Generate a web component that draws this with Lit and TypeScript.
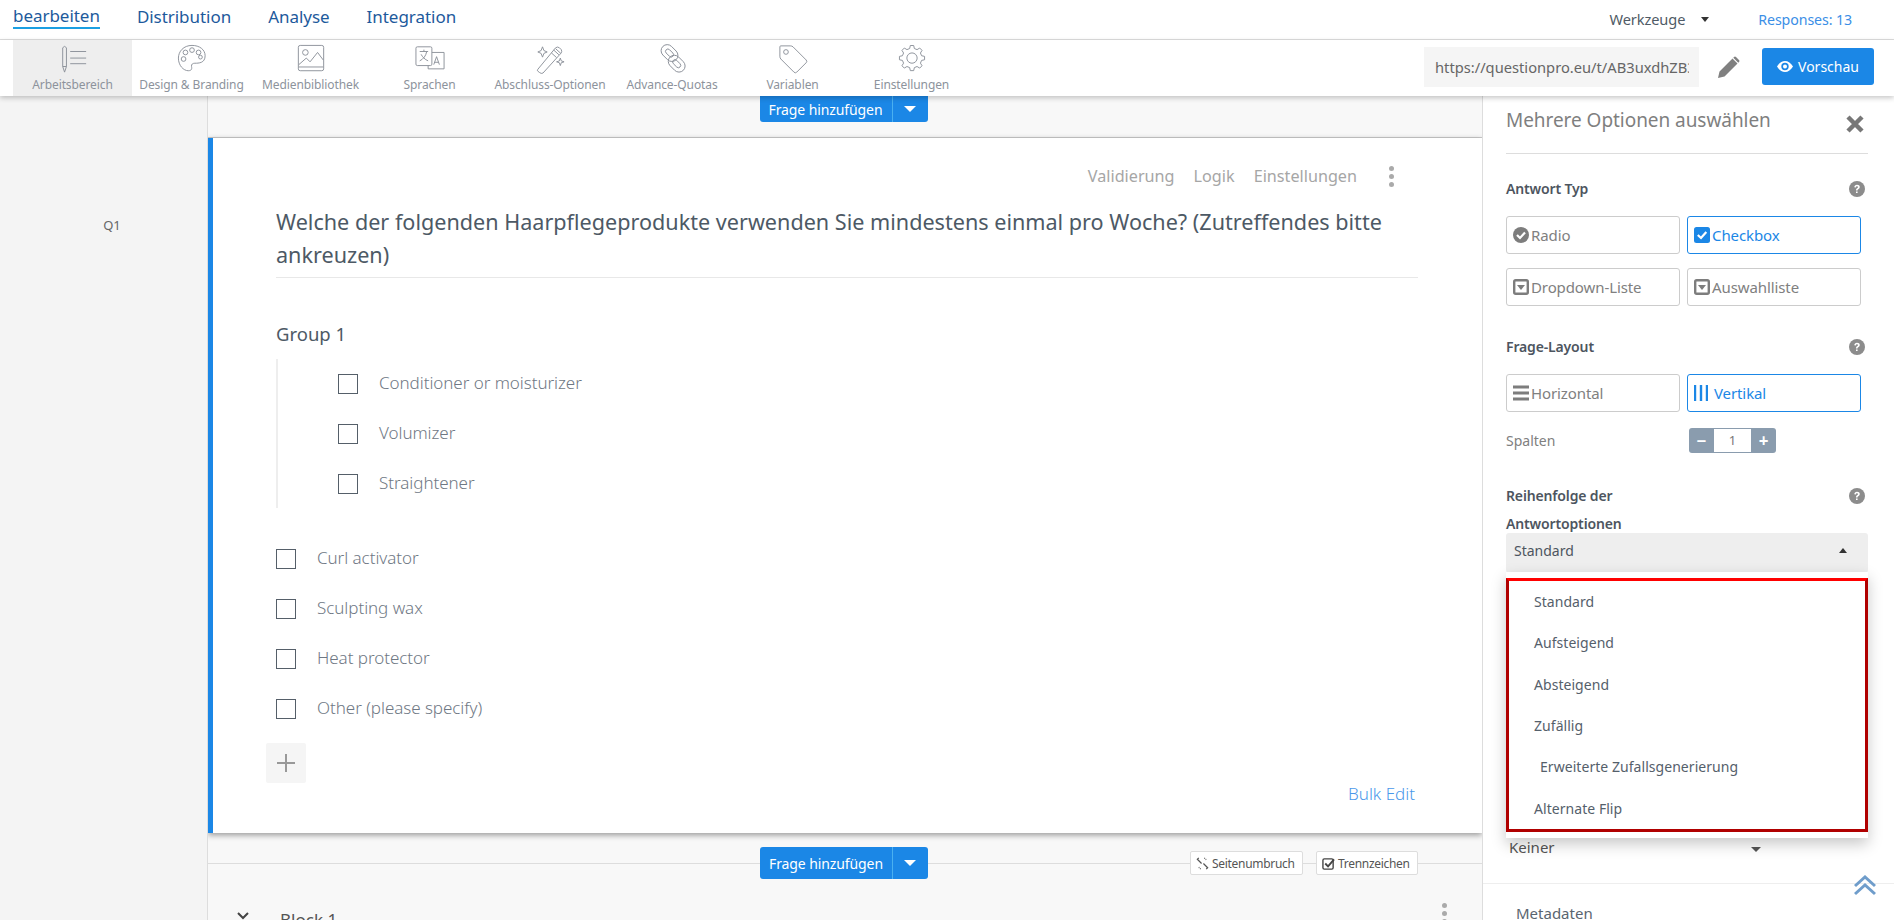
import { LitElement, html, css, svg } from "lit";
import { customElement } from "lit/decorators.js";

const gearPath = () => {
  const pts: string[] = [];
  const n = 8, cx = 16, cy = 15;
  for (let i = 0; i < n; i++) {
    const a = (i / n) * Math.PI * 2 - Math.PI / 2;
    const w = Math.PI / n;
    const p = (r: number, t: number) => `${(cx + r * Math.cos(t)).toFixed(1)} ${(cy + r * Math.sin(t)).toFixed(1)}`;
    pts.push(`${i ? "L" : "M"}${p(10.5, a - w * 0.62)}`, `L${p(13.5, a - w * 0.34)}`, `L${p(13.5, a + w * 0.34)}`, `L${p(10.5, a + w * 0.62)}`);
  }
  return pts.join(" ") + " Z";
};

const toolIcons: Record<string, unknown> = {
  work: svg`<path d="M5 4 Q7 1 9 4 V24 L7 30 L5 24 Z M5 24 H9"/><path d="M13 8 H30 M13 15 H30 M13 21 H30"/>`,
  palette: svg`<path d="M16 1.5 C7 1.500 1.500 8 1.500 15 C1.500 23 7 28.500 12 28.500 C16 28.500 16 26 15.500 24 C15 21.500 17 20.500 19 20.500 C23 20.500 30 20.500 30 12.500 C30 6 24 1.500 16 1.500 Z"/><circle cx="9" cy="9" r="2.500"/><circle cx="16" cy="6.500" r="2.500"/><circle cx="23" cy="9" r="2.500"/><circle cx="7" cy="16" r="2.500"/><circle cx="25" cy="14" r="2"/>`,
  image: svg`<rect x="2.500" y="1.500" width="27" height="27" rx="2"/><circle cx="10" cy="9" r="3"/><path d="M3 22 L11 15 L15 19 L23 9 L29 17 M3 24.500 H29"/>`,
  lang: svg`<rect x="1" y="3" width="17" height="20" rx="1.500"/><path d="M18 9 H31 V26.500 H14 V23"/><path d="M5 8 H14 M9.500 6 V8 M12.500 8 C11.500 13 9 16 5 18 M6.500 11 C8 14 10.500 16.500 14 18"/><path d="M20 22 L23 13.500 L26 22 M21 19.500 H25"/>`,
  wand: svg`<path d="M3 27 L22 4 Q24 2.500 26 4 L28 6 Q29 8 28 9.500 L8.500 31 Q6.500 32 5 30.500 L3 29 Q2 28 3 27 Z M17.500 9.500 L23 14.500 M20 6.500 L25.500 11.500 M22 5 L27.500 10"/><path d="M8 3 L9.500 7 L13 8.500 L9.500 10 L8 14 L6.500 10 L3 8.500 L6.500 7 Z"/><path d="M27 15 L28 18 L31 19 L28 20 L27 23 L26 20 L23 19 L26 18 Z"/>`,
  chain: svg`<g transform="rotate(45 13 10)"><rect x="3" y="3" width="20" height="13" rx="6.500"/><rect x="8" y="7" width="10" height="5" rx="2.500"/></g><g transform="rotate(45 21 21)"><rect x="11" y="14.500" width="20" height="13" rx="6.500"/><rect x="16" y="18.500" width="10" height="5" rx="2.500"/></g>`,
  tag: svg`<path d="M3 2 H13 Q15 2 16 3 L30 17 Q31.500 18.500 30 20 L20 30 Q18.500 31.500 17 30 L3 16 Q2 15 2 13 V3 Q2 2 3 2 Z"/><circle cx="8.500" cy="8.500" r="2.500"/>`,
  gear: svg`<path d="${gearPath()}" stroke-linejoin="round"/><circle cx="16" cy="15" r="5.500"/>`,
};

const tools = [
  { label: "Arbeitsbereich", icon: "work", cls: "active" },
  { label: "Design & Branding", icon: "palette", cls: "" },
  { label: "Medienbibliothek", icon: "image", cls: "" },
  { label: "Sprachen", icon: "lang", cls: "" },
  { label: "Abschluss-Optionen", icon: "wand", cls: "wide" },
  { label: "Advance-Quotas", icon: "chain", cls: "wide" },
  { label: "Variablen", icon: "tag", cls: "" },
  { label: "Einstellungen", icon: "gear", cls: "" },
];

const help = html`<svg class="help" viewBox="0 0 16 16"><circle cx="8" cy="8" r="8" fill="#8c8c8c"/><path d="M5.300 6.200 C5.300 4.600 6.500 3.700 8 3.700 C9.600 3.700 10.800 4.600 10.800 6 C10.800 8 8.500 7.900 8.500 9.600 H7 C7 7.200 9 7.300 9 6.100 C9 5.500 8.600 5.200 8 5.200 C7.300 5.200 7 5.600 6.900 6.400 Z M7 10.400 H8.600 V12 H7 Z" fill="#fff"/></svg>`;

const ic = {
  radio: html`<svg class="oi" viewBox="0 0 16 16"><circle cx="8" cy="8" r="8" fill="#7d7d7d"/><path d="M4 8 L7 11 L12 5.500" fill="none" stroke="#fff" stroke-width="2.200"/></svg>`,
  check: html`<svg class="oi" viewBox="0 0 16 16"><rect width="16" height="16" rx="2.500" fill="#1b87e6"/><path d="M3.800 8 L7 11 L12.300 5" fill="none" stroke="#fff" stroke-width="2.200"/></svg>`,
  drop: html`<svg class="oi" viewBox="0 0 16 16"><rect x="1.200" y="1.200" width="13.600" height="13.600" rx="1.500" fill="none" stroke="#7d7d7d" stroke-width="2.400"/><path d="M4 6 H12 L8 11 Z" fill="#7d7d7d"/></svg>`,
  bars: html`<svg class="oi" viewBox="0 0 16 16"><path d="M0 2 H16 M0 8 H16 M0 14 H16" stroke="#7d7d7d" stroke-width="3"/></svg>`,
  vert: html`<svg class="oi vert" viewBox="0 0 14 16"><path d="M1 0 V16 M7 0 V16 M13 0 V16" stroke="#1b87e6" stroke-width="2.400"/></svg>`,
};

const menu = [
  { t: "Standard", c: "" },
  { t: "Aufsteigend", c: "" },
  { t: "Absteigend", c: "" },
  { t: "Zufällig", c: "" },
  { t: "Erweiterte Zufallsgenerierung", c: "indent" },
  { t: "Alternate Flip", c: "" },
];

const groupItems = ["Conditioner or moisturizer", "Volumizer", "Straightener"];
const looseItems = ["Curl activator", "Sculpting wax", "Heat protector", "Other (please specify)"];

const addButton = html`<div class="add"><span class="add-label">Frage hinzufügen</span><span class="add-caret"></span></div>`;

@customElement("app-root")
export class AppRoot extends LitElement {
  static styles = css`
    :host { display: block; width: 100%; height: 920px; overflow: hidden; background: #fff; font-family: "Noto Sans", "Open Sans", sans-serif; color: #555; }
    * { box-sizing: border-box; }
    .nav { height: 40px; border-bottom: 1px solid #ddd; display: flex; align-items: flex-start; padding-left: 13px; background: #fff; }
    .nav a { font-size: 17px; line-height: 22px; margin-top: 6px; color: #1d5a9c; margin-right: 37px; letter-spacing: -0.04px; }
    .nav a.on { color: #1d5a9c; border-bottom: 2px solid #1b9fe2; height: 26px; margin-top: 3px; padding-top: 2px; line-height: 22px; }
    .nav .grow { flex: 1; }
    .werk { font-size: 14.6px; color: #4f5b66; margin-top: 9px; line-height: 20px; letter-spacing: -0.1px; }
    .caret-d { width: 0; height: 0; border: 4px solid transparent; border-top: 5px solid #333; border-bottom: 0; margin: 17px 49px 0 16px; }
    .resp { font-size: 14.2px; color: #3b8ee6; margin: 10px 42px 0 0; line-height: 20px; letter-spacing: -0.1px; }
    .tools { height: 56px; display: flex; align-items: stretch; padding-left: 13px; background: #fff; box-shadow: 0 2px 5px rgba(0,0,0,.22); position: relative; z-index: 6; }
    .tile { width: 119px; display: flex; flex-direction: column; align-items: center; padding-top: 4px; }
    .tile.active { background: #eee; }
    .tile.wide { width: 122px; }
    .tile svg { width: 30px; height: 30px; fill: none; stroke: #8b9099; stroke-width: 1; }
    .tile span { font-size: 12px; line-height: 15px; margin-top: 3px; color: #8d939c; white-space: nowrap; letter-spacing: -0.1px; }
    .tools .grow { flex: 1; }
    .url { width: 275px; height: 40px; margin-top: 7px; background: #f5f5f5; padding: 0 10px 0 11px; }
    .url span { display: block; font-size: 14.7px; line-height: 40px; color: #666; overflow: hidden; white-space: nowrap; }
    .pen { width: 22px; height: 22px; margin: 16px 22px 0 19px; fill: #808080; }
    .prev { width: 112px; height: 37px; margin: 8px 20px 0 0; background: #1b87e6; border-radius: 3px; color: #fff; font-size: 14px; display: flex; align-items: center; justify-content: center; gap: 5px; }
    .prev svg { width: 16px; height: 11px; fill: #fff; }
    .main { display: grid; grid-template-columns: 208px 1275px 1fr; height: 824px; overflow: hidden; }
    .left { background: #f4f4f4; border-right: 1px solid #ddd; font-size: 13px; color: #666; text-align: center; padding: 121px 0 0 17px; line-height: 16px; }
    .center { background: #f8f8f8; display: flex; flex-direction: column; overflow: hidden; border-right: 1px solid #ddd; }
    .strip { height: 42px; flex: none; display: flex; justify-content: center; padding-right: 3px; border-bottom: 1px solid #ccc; }
    .add { width: 168px; height: 26px; background: #1b87e6; border-radius: 0 0 3px 3px; display: flex; color: #fff; font-size: 14px; flex: none; align-items: center; }
    .add-label { width: 133px; text-align: center; border-right: 1px solid #4ab0f0; height: 100%; display: flex; align-items: center; justify-content: center; letter-spacing: -0.1px; white-space: nowrap; }
    .add-caret { width: 0; height: 0; border: 6px solid transparent; border-top: 6px solid #fff; border-bottom: 0; margin-left: 11px; }
    .card { height: 695px; flex: none; background: #fff; border-left: 5px solid #1b87e6; box-shadow: 0 2px 6px rgba(0,0,0,.4); display: flex; flex-direction: column; padding: 0 64px 0 63px; position: relative; z-index: 1; }
    .links { display: flex; justify-content: flex-end; align-items: center; height: 24px; margin-top: 26px; color: #a6a6a6; font-size: 16.2px; }
    .links span { margin-left: 19px; }
    .dots { width: 5px; display: flex; flex-direction: column; gap: 3px; margin-left: 32px; margin-right: 24px; }
    .dots i { width: 5px; height: 5px; border-radius: 50%; background: #aaa; }
    .q { font-size: 21.6px; line-height: 33px; color: #4d5965; margin: 17px 0 0 0; border-bottom: 1px solid #e8e8e8; height: 73px; }
    .g { font-size: 18.5px; line-height: 24px; color: #4d5965; margin-top: 44px; }
    .grp { border-left: 2px solid #eee; margin-top: 13px; height: 149px; padding: 15px 0 0 60px; display: flex; flex-direction: column; gap: 30px; }
    .opt { display: flex; align-items: center; height: 20px; font-size: 17px; font-weight: 300; color: #6f7884; letter-spacing: -0.05px; }
    .lbl { margin-top: -3px; }
    .box { width: 20px; height: 20px; border: 1px solid #555f69; margin-right: 21px; flex: none; }
    .loose { margin-top: 41px; display: flex; flex-direction: column; gap: 30px; }
    .plus { width: 40px; height: 40px; background: #f5f5f5; border-radius: 2px; margin: 24px 0 0 -10px; display: flex; align-items: center; justify-content: center; }
    .plus svg { width: 18px; height: 18px; stroke: #999; stroke-width: 2; }
    .bulk { align-self: flex-end; margin: 0 3px 0 0; font-size: 17px; font-weight: 300; color: #4a98ea; line-height: 22px; }
    .sep { flex: none; height: 32px; margin-top: 14px; display: flex; align-items: center; position: relative; padding-left: 552px; }
    .sep::before { content: ""; position: absolute; left: 0; right: 0; top: 16px; height: 1px; background: #ddd; }
    .sep .add { position: relative; height: 32px; border-radius: 3px; }
    .chip { position: relative; height: 24px; border: 1px solid #ddd; background: #fff; border-radius: 2px; font-size: 12px; color: #555; display: flex; align-items: center; gap: 3px; padding: 0 5px; margin-left: 13px; letter-spacing: -0.3px; white-space: nowrap; }
    .chip.page { margin-left: 262px; width: 113px; }
    .chip.divider { width: 102px; }
    .chip svg { width: 13px; height: 13px; flex: none; }
    .block { flex: none; display: flex; align-items: flex-start; height: 40px; padding: 30px 0 0 29px; font-size: 17px; line-height: 22px; color: #555; position: relative; }
    .block svg { width: 12px; height: 8px; margin: 3px 31px 0 0; stroke: #444; stroke-width: 2; fill: none; }
    .block .dots { position: absolute; left: 1234px; top: 24px; margin: 0; }
    .panel { background: #fff; position: relative; padding: 12px 26px 0 23px; overflow: hidden; }
    .ptitle { display: flex; justify-content: space-between; height: 46px; border-bottom: 1px solid #ddd; font-size: 19px; line-height: 24px; color: #7f7f7f; letter-spacing: -0.05px; }
    .ptitle svg { width: 18px; height: 18px; margin: 7px 4px 0 0; stroke: #777; stroke-width: 4.500; }
    .hrow { display: flex; justify-content: space-between; align-items: center; font-size: 14px; font-weight: 600; color: #4d5560; line-height: 20px; letter-spacing: -0.15px; }
    .hrow .help { margin-right: 3px; }
    .help { width: 16px; height: 16px; flex: none; }
    .first { margin-top: 25px; }
    .btns { display: grid; grid-template-columns: 174px 174px; column-gap: 7px; row-gap: 14px; margin-top: 17px; }
    .ob { height: 38px; border: 1px solid #ccc; border-radius: 3px; display: flex; align-items: center; padding-left: 6px; gap: 2px; font-size: 15px; color: #808080; letter-spacing: -0.1px; }
    .ob.sel { border-color: #1b87e6; color: #1b87e6; }
    .oi { width: 16px; height: 16px; flex: none; }
    .oi.vert { width: 14px; margin-right: 4px; }
    .sec2 { margin-top: 31px; }
    .spal { display: flex; align-items: center; margin-top: 16px; font-size: 14px; color: #808080; height: 25px; }
    .spal > span:first-child { width: 183px; }
    .step { width: 87px; height: 25px; background: #8a9cae; border-radius: 3px; display: flex; color: #fff; align-items: center; justify-content: space-between; }
    .step b { width: 25px; text-align: center; font-size: 17px; line-height: 25px; }
    .step span { width: 37px; height: 23px; background: #fff; color: #777; text-align: center; font-size: 13px; line-height: 23px; }
    .rh { margin-top: 29px; display: block; line-height: 28px; font-size: 14px; font-weight: 600; color: #4d5560; letter-spacing: -0.15px; }
    .rh div { display: flex; justify-content: space-between; align-items: center; }
    .rh .help { margin-right: 3px; }
    .sel-box { height: 40px; background: #eee; border-radius: 3px; margin-top: -5px; display: flex; justify-content: space-between; align-items: center; padding: 0 21px 5px 8px; font-size: 14px; color: #4d5560; }
    .up { width: 0; height: 0; border: 4.500px solid transparent; border-bottom: 5px solid #333; border-top: 0; }
    .drop { position: absolute; left: 23px; right: 26px; top: 476px; height: 266px; background: #fff; padding-top: 6px; box-shadow: 0 6px 14px rgba(0,0,0,.22); z-index: 3; }
    .red { height: 254px; border: 3px solid #b00000; border-top-color: #f00; }
    .mi { height: 41.300px; display: flex; align-items: center; padding-left: 25px; font-size: 14px; color: #55606b; letter-spacing: 0.05px; }
    .mi.indent { padding-left: 31px; }
    .keiner { margin-top: 264px; display: flex; align-items: center; padding-left: 3px; font-size: 15px; color: #555; height: 20px; }
    .keiner i { width: 0; height: 0; border: 5px solid transparent; border-top: 5px solid #555; border-bottom: 0; margin: 4px 0 0 196px; }
    .kdiv { border-top: 1px solid #eee; margin: 26px -26px 0 -23px; padding: 19px 0 0 33px; font-size: 15px; color: #5a6570; line-height: 20px; }
    .top { position: absolute; right: 18px; bottom: 24px; z-index: 4; width: 22px; height: 21px; fill: none; stroke: #6f9dcb; stroke-width: 3; }
  `;

  render() {
    return html`
      <div class="nav">
        <a class="on">bearbeiten</a><a>Distribution</a><a>Analyse</a><a>Integration</a>
        <span class="grow"></span>
        <span class="werk">Werkzeuge</span><span class="caret-d"></span><span class="resp">Responses: 13</span>
      </div>
      <div class="tools">
        ${tools.map((t) => html`<div class="tile ${t.cls}"><svg viewBox="0 0 32 32">${toolIcons[t.icon]}</svg><span>${t.label}</span></div>`)}
        <span class="grow"></span>
        <div class="url"><span>https://questionpro.eu/t/AB3uxdhZB3</span></div>
        <svg class="pen" viewBox="0 0 22 22"><path d="M0 22 L1.500 15.500 L14.500 2.500 L19.500 7.500 L6.500 20.500 Z M16 1 Q17 0 18 1 L21 4 Q22 5 21 6 L20.300 6.700 L15.300 1.700 Z"/></svg>
        <div class="prev"><svg viewBox="0 0 16 11"><path fill-rule="evenodd" d="M0 5.500 C2 2 5 0 8 0 C11 0 14 2 16 5.500 C14 9 11 11 8 11 C5 11 2 9 0 5.500 Z M8 1.800 A3.700 3.700 0 1 0 8 9.200 A3.700 3.700 0 1 0 8 1.800 Z M8 3.500 A2 2 0 1 1 8 7.500 A2 2 0 1 1 8 3.500 Z"/></svg>Vorschau</div>
      </div>
      <div class="main">
        <div class="left">Q1</div>
        <div class="center">
          <div class="strip">${addButton}</div>
          <div class="card">
            <div class="links"><span>Validierung</span><span>Logik</span><span>Einstellungen</span><div class="dots"><i></i><i></i><i></i></div></div>
            <div class="q">Welche der folgenden Haarpflegeprodukte verwenden Sie mindestens einmal pro Woche? (Zutreffendes bitte ankreuzen)</div>
            <div class="g">Group 1</div>
            <div class="grp">${groupItems.map((o) => html`<div class="opt"><span class="box"></span><span class="lbl">${o}</span></div>`)}</div>
            <div class="loose">${looseItems.map((o) => html`<div class="opt"><span class="box"></span><span class="lbl">${o}</span></div>`)}</div>
            <div class="plus"><svg viewBox="0 0 18 18"><path d="M9 0 V18 M0 9 H18"/></svg></div>
            <div class="bulk">Bulk Edit</div>
          </div>
          <div class="sep">
            ${addButton}
            <div class="chip page"><svg viewBox="0 0 14 14" fill="none" stroke="#555" stroke-width="1.300"><path d="M2 3 L6 7 M8 7 L12 11 M3 1 L1 3 M11 13 L13 11"/><path d="M9 1 L11 3 M5 13 L3 11" stroke-dasharray="1 1"/></svg>Seitenumbruch</div>
            <div class="chip divider"><svg viewBox="0 0 14 14" fill="none" stroke="#444" stroke-width="1.500"><rect x="1" y="2" width="11" height="11" rx="1.500"/><path d="M3.500 7 L6.500 10 L13 2.500" stroke-width="2"/></svg>Trennzeichen</div>
          </div>
          <div class="block"><svg viewBox="0 0 12 8"><path d="M1 1 L6 6 L11 1"/></svg>Block 1<div class="dots"><i></i><i></i><i></i></div></div>
        </div>
        <div class="panel">
          <div class="ptitle">Mehrere Optionen auswählen<svg viewBox="0 0 18 18"><path d="M2 2 L16 16 M16 2 L2 16"/></svg></div>
          <div class="hrow first">Antwort Typ ${help}</div>
          <div class="btns">
            <div class="ob">${ic.radio}Radio</div>
            <div class="ob sel">${ic.check}Checkbox</div>
            <div class="ob">${ic.drop}Dropdown-Liste</div>
            <div class="ob">${ic.drop}Auswahlliste</div>
          </div>
          <div class="hrow sec2">Frage-Layout ${help}</div>
          <div class="btns">
            <div class="ob">${ic.bars}Horizontal</div>
            <div class="ob sel">${ic.vert}Vertikal</div>
          </div>
          <div class="spal"><span>Spalten</span><div class="step"><b>−</b><span>1</span><b>+</b></div></div>
          <div class="rh"><div>Reihenfolge der ${help}</div>Antwortoptionen</div>
          <div class="sel-box">Standard<span class="up"></span></div>
          <div class="drop"><div class="red">${menu.map((m) => html`<div class="mi ${m.c}">${m.t}</div>`)}</div></div>
          <div class="keiner">Keiner<i></i></div>
          <div class="kdiv">Metadaten</div>
          <svg class="top" viewBox="0 0 22 21"><path d="M1 11 L11 2 L21 11 M1 19 L11 10 L21 19"/></svg>
        </div>
      </div>
    `;
  }
}
